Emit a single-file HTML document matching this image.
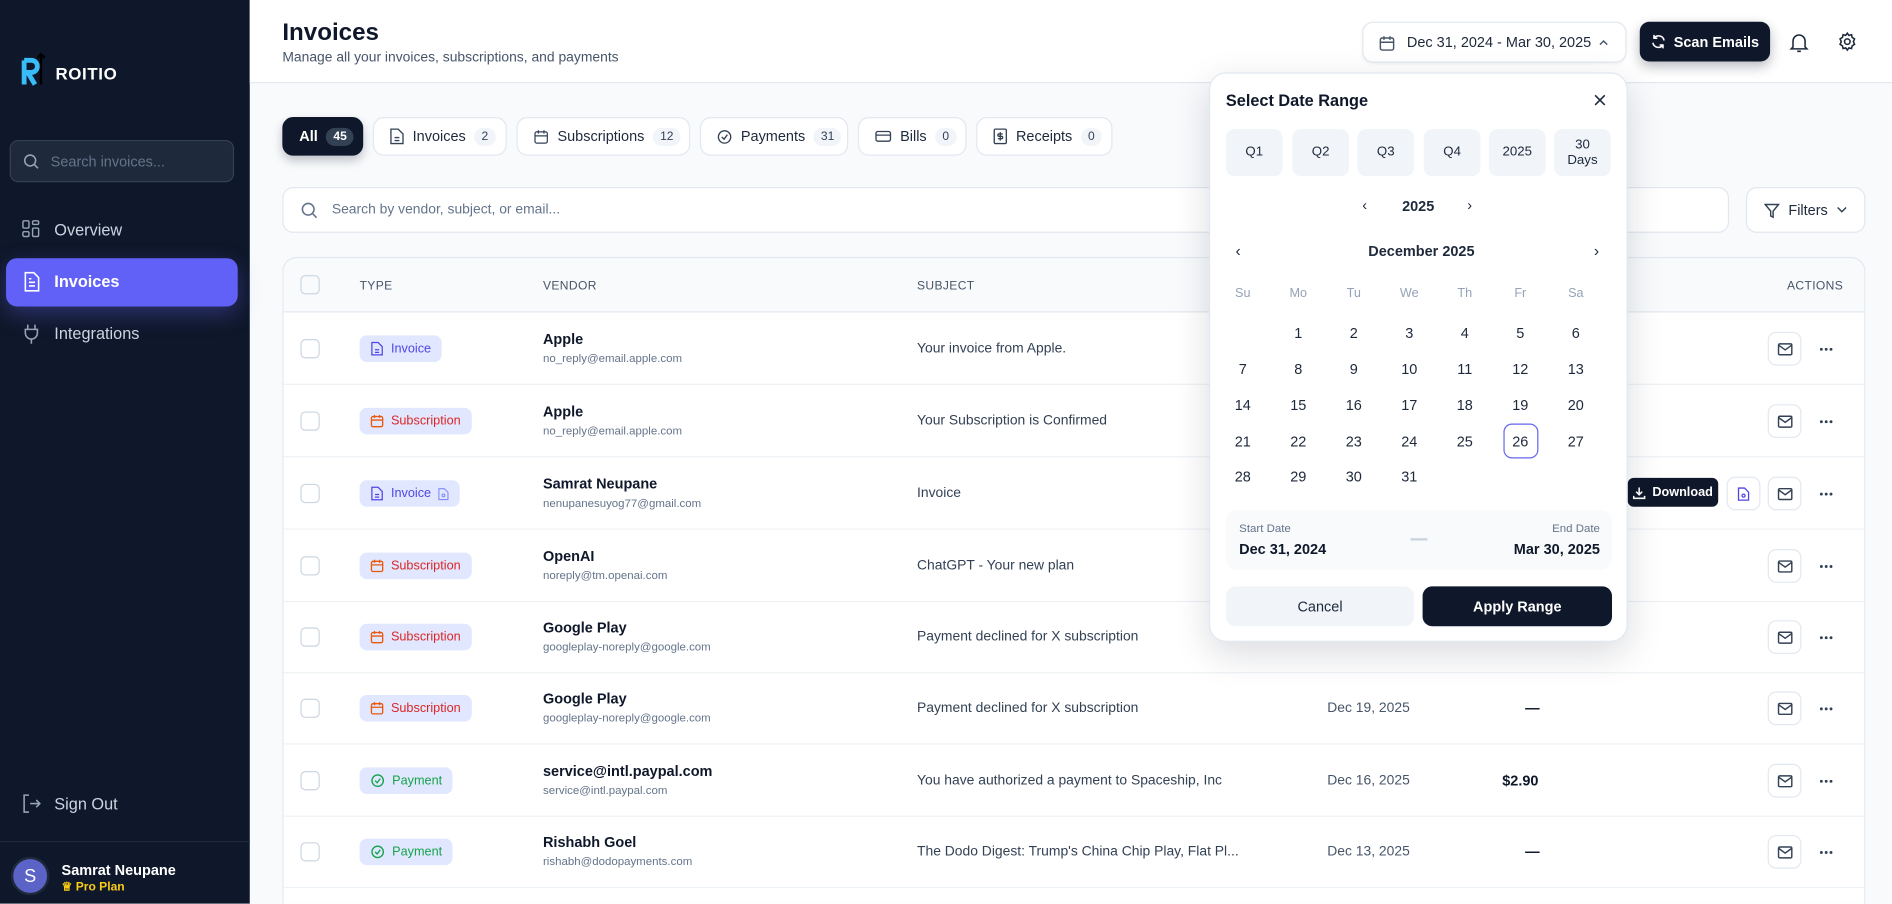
<!DOCTYPE html>
<html><head><meta charset="utf-8">
<style>
*{box-sizing:border-box;margin:0;padding:0}
html,body{width:1892px;height:904px;overflow:hidden;background:#f8fafc;font-family:"Liberation Sans",sans-serif;color:#0f172a}
#w{position:absolute;left:0;top:0;width:1568px;height:749px;transform:scale(1.2066);transform-origin:0 0;background:#f8fafc;overflow:hidden}
.a{position:absolute}
svg{flex-shrink:0}
.sb{left:0;top:0;width:207px;height:749px;background:#0f172a}
.nav{position:absolute;left:18px;font-size:13.5px;color:#cbd5e1;display:flex;align-items:center;gap:11px}
.hdr{left:207px;top:0;width:1361px;height:69px;background:#fff;border-bottom:1px solid #e2e8f0}
.tab{position:absolute;top:97px;height:32px;border:1px solid #e2e8f0;background:#fff;border-radius:9px;display:flex;align-items:center;padding:0 10px 0 13px;gap:7px;font-size:12px;color:#1e293b;white-space:nowrap}
.cnt{background:#f1f5f9;border-radius:9px;font-size:10px;padding:2px 6px;color:#334155}
.tbl{left:234px;top:213px;width:1312px;height:536px;background:#fff;border:1px solid #e2e8f0;border-bottom:none;border-radius:12px 12px 0 0;overflow:hidden}
.th{position:absolute;top:0;left:0;width:100%;height:45px;background:#f8fafc;border-bottom:1px solid #e2e8f0;font-size:10px;color:#475569;letter-spacing:.3px}
.th span{position:absolute;top:18px}
.row{position:absolute;left:0;width:100%;height:60px;border-bottom:1px solid #eef2f6}
.cb{position:absolute;left:14px;top:22px;width:16px;height:16px;border:1.5px solid #cbd5e1;border-radius:4px}
.badge{position:absolute;left:63px;top:19px;height:22px;border-radius:6px;background:#e0e7ff;display:flex;align-items:center;padding:0 9px;gap:6px;font-size:10.5px}
.vn{position:absolute;left:215px;top:15px;font-size:12px;font-weight:bold;color:#0f172a}
.ve{position:absolute;left:215px;top:33px;font-size:9.5px;color:#64748b}
.sj{position:absolute;left:525px;top:24px;font-size:11.5px;color:#334155}
.dt{position:absolute;left:865px;top:24px;font-size:11.5px;color:#475569}
.am{position:absolute;left:1010px;top:23px;font-size:12px;font-weight:bold;color:#0f172a}
.mb{position:absolute;left:1230px;top:16px;width:28px;height:28px;border:1px solid #e2e8f0;border-radius:7px;display:flex;align-items:center;justify-content:center}
.dots{position:absolute;left:1273px;top:29px;width:11px;height:3px}
.pop{left:1002px;top:60px;width:347px;height:472px;background:#fff;border:1px solid #e2e8f0;border-radius:14px;box-shadow:0 10px 30px rgba(15,23,42,.15)}
.q{position:absolute;top:46px;width:47px;height:39px;background:#f1f5f9;border-radius:7px;font-size:11px;color:#1e293b;display:flex;align-items:center;justify-content:center;text-align:center;line-height:13px}
.wd{position:absolute;top:176px;font-size:10.5px;color:#94a3b8;width:30px;text-align:center}
.d{position:absolute;width:30px;text-align:center;font-size:12px;color:#1e293b}
</style></head><body><div id="w">
<div class="a sb">
  <div class="a" style="left:16px;top:42px;width:24px;height:32px">
    <svg width="24" height="32" viewBox="0 0 24 32"><path d="M4 8h6a5 5 0 010 10H7l6 10" fill="none" stroke="#38bdf8" stroke-width="4"/><path d="M4 8v20" stroke="#38bdf8" stroke-width="4"/><path d="M18 28V3M15 6l3-3 3 3" stroke="#000" stroke-width="2" fill="none"/></svg>
  </div>
  <div class="a" style="left:46px;top:53px;font-size:14px;font-weight:bold;color:#fff;letter-spacing:.5px">ROITIO</div>
  <div class="a" style="left:8px;top:116px;width:186px;height:35px;background:#1e293b;border:1px solid #334155;border-radius:7px">
    <svg class="a" style="left:10px;top:10px" width="14" height="14" viewBox="0 0 14 14"><circle cx="6" cy="6" r="4.5" fill="none" stroke="#94a3b8" stroke-width="1.3"/><path d="M9.5 9.5l3 3" stroke="#94a3b8" stroke-width="1.3"/></svg>
    <div class="a" style="left:33px;top:10px;font-size:12px;color:#64748b">Search invoices...</div>
  </div>
  <div class="nav" style="top:182px"><svg width="16" height="16" viewBox="0 0 16 16" fill="none" stroke="#94a3b8" stroke-width="1.2"><rect x="1" y="1" width="5" height="6" rx="1"/><rect x="9" y="1" width="5" height="3" rx="1"/><rect x="9" y="7" width="5" height="7" rx="1"/><rect x="1" y="10" width="5" height="4" rx="1"/></svg>Overview</div>
  <div class="a" style="left:5px;top:214px;width:192px;height:40px;background:#6161f8;border-radius:9px;box-shadow:0 6px 18px rgba(99,102,241,.35)"></div>
  <div class="nav" style="top:225px;color:#fff;font-weight:bold"><svg width="16" height="17" viewBox="0 0 16 17" fill="none" stroke="#fff" stroke-width="1.3"><path d="M3 1h7l4 4v11H3z"/><path d="M6 9h5M6 12h5M6 6h2"/></svg>Invoices</div>
  <div class="nav" style="top:268px"><svg width="16" height="17" viewBox="0 0 16 17" fill="none" stroke="#94a3b8" stroke-width="1.3"><path d="M5 1v4M11 1v4M3 5h10v3a5 5 0 01-10 0zM8 13v4"/></svg>Integrations</div>
  <div class="nav" style="top:658px"><svg width="16" height="16" viewBox="0 0 16 16" fill="none" stroke="#94a3b8" stroke-width="1.3"><path d="M6 1H2v14h4M7 8h8M12 5l3 3-3 3"/></svg>Sign Out</div>
  <div class="a" style="left:0;top:697px;width:207px;height:1px;background:#1e293b"></div>
  <div class="a" style="left:9px;top:710px;width:32px;height:32px;border-radius:50%;background:#5b63c6;border:2px solid #1e293b;color:#fff;font-size:15px;display:flex;align-items:center;justify-content:center">S</div>
  <div class="a" style="left:51px;top:714px;font-size:12px;font-weight:bold;color:#fff">Samrat Neupane</div>
  <div class="a" style="left:51px;top:730px;font-size:10px;font-weight:bold;color:#facc15">♕ Pro Plan</div>
</div>
<div class="a hdr">
  <div class="a" style="left:27px;top:16px;font-size:20px;font-weight:bold">Invoices</div>
  <div class="a" style="left:27px;top:42px;font-size:11.5px;color:#475569">Manage all your invoices, subscriptions, and payments</div>
  <div class="a" style="left:922px;top:18px;width:219px;height:34px;border:1px solid #e2e8f0;border-radius:9px;background:#fff;box-shadow:0 1px 3px rgba(0,0,0,.06)">
    <svg class="a" style="left:13px;top:10px" width="13" height="14" viewBox="0 0 13 14" fill="none" stroke="#475569" stroke-width="1.2"><rect x="1" y="2.5" width="11" height="10" rx="1.5"/><path d="M1 6h11M4 1v3M9 1v3"/></svg>
    <div class="a" style="left:36px;top:9px;font-size:12px;color:#1e293b">Dec 31, 2024 - Mar 30, 2025</div>
    <svg class="a" style="left:194px;top:12px" width="10" height="8" viewBox="0 0 10 8"><path d="M2 6l3-3 3 3" fill="none" stroke="#475569" stroke-width="1.2"/></svg>
  </div>
  <div class="a" style="left:1152px;top:18px;width:108px;height:33px;background:#0f172a;border-radius:8px;box-shadow:0 4px 10px rgba(15,23,42,.3);color:#fff;font-size:12px;font-weight:bold;display:flex;align-items:center;justify-content:center;gap:6px"><svg width="13" height="13" viewBox="0 0 14 14" fill="none" stroke="#fff" stroke-width="1.4"><path d="M12 6a5 5 0 00-9-2M2 8a5 5 0 009 2M3 1v3h3M11 13v-3H8"/></svg>Scan Emails</div>
  <svg class="a" style="left:1276px;top:26px" width="16" height="18" viewBox="0 0 16 18" fill="none" stroke="#1e293b" stroke-width="1.3"><path d="M3 13V8a5 5 0 0110 0v5l1.5 1.5h-13zM6.5 16.5h3"/></svg>
  <svg class="a" style="left:1316px;top:26px" width="16" height="17" viewBox="0 0 16 16" fill="none" stroke="#1e293b" stroke-width="1.3"><circle cx="8" cy="8" r="2.3"/><path d="M8 1l1.3 1.8 2.2-.5.5 2.2L14 5.8l-1 2.2 1 2.2-2 1.3-.5 2.2-2.2-.5L8 15l-1.3-1.8-2.2.5-.5-2.2L2 10.2 3 8 2 5.8l2-1.3.5-2.2 2.2.5z"/></svg>
</div>
<div class="tab" style="left:234px;width:67px;background:#0f172a;border-color:#0f172a;color:#fff;font-weight:bold;box-shadow:0 4px 8px rgba(15,23,42,.25)">All<span class="cnt" style="background:#334155;color:#fff">45</span></div>
<div class="tab" style="left:309px;width:111px"><svg width="12" height="14" viewBox="0 0 12 14" fill="none" stroke="#334155" stroke-width="1.1"><path d="M1 1h6l4 4v8H1zM4 8h4M4 10.5h4"/></svg>Invoices<span class="cnt">2</span></div>
<div class="tab" style="left:428px;width:144px"><svg width="13" height="13" viewBox="0 0 13 14" fill="none" stroke="#334155" stroke-width="1.1"><rect x="1" y="2.5" width="11" height="10" rx="1.5"/><path d="M1 6h11M4 1v3M9 1v3"/></svg>Subscriptions<span class="cnt">12</span></div>
<div class="tab" style="left:580px;width:123px"><svg width="13" height="13" viewBox="0 0 14 14" fill="none" stroke="#334155" stroke-width="1.2"><circle cx="7" cy="7" r="5.5"/><path d="M4.5 7l2 2 3-4"/></svg>Payments<span class="cnt">31</span></div>
<div class="tab" style="left:711px;width:90px"><svg width="14" height="12" viewBox="0 0 14 12" fill="none" stroke="#334155" stroke-width="1.1"><rect x="1" y="2" width="12" height="8" rx="1.5"/><path d="M1 5h12"/></svg>Bills<span class="cnt">0</span></div>
<div class="tab" style="left:809px;width:113px"><svg width="12" height="14" viewBox="0 0 12 14" fill="none" stroke="#334155" stroke-width="1.1"><rect x="1" y="1" width="10" height="12" rx="1"/><path d="M6 3.5v7M8 5H5a1 1 0 000 2h2a1 1 0 010 2H4"/></svg>Receipts<span class="cnt">0</span></div>
<div class="a" style="left:234px;top:155px;width:1199px;height:38px;background:#fff;border:1px solid #e2e8f0;border-radius:9px">
  <svg class="a" style="left:14px;top:11px" width="15" height="15" viewBox="0 0 14 14"><circle cx="6" cy="6" r="4.5" fill="none" stroke="#64748b" stroke-width="1.2"/><path d="M9.5 9.5l3 3" stroke="#64748b" stroke-width="1.2"/></svg>
  <div class="a" style="left:40px;top:12px;font-size:11.5px;color:#64748b">Search by vendor, subject, or email...</div>
</div>
<div class="a" style="left:1447px;top:155px;width:99px;height:38px;background:#fff;border:1px solid #e2e8f0;border-radius:9px;display:flex;align-items:center;justify-content:center;gap:7px;font-size:12px;color:#1e293b"><svg width="13" height="13" viewBox="0 0 13 13" fill="none" stroke="#334155" stroke-width="1.2"><path d="M1 1.5h11L7.5 7v5L5.5 11V7z"/></svg>Filters<svg width="9" height="6" viewBox="0 0 9 6"><path d="M1 1l3.5 3.5L8 1" fill="none" stroke="#334155" stroke-width="1.2"/></svg></div>
<div class="a tbl">
  <div class="th"><div class="cb" style="top:14px"></div><span style="left:63px">TYPE</span><span style="left:215px">VENDOR</span><span style="left:525px">SUBJECT</span><span style="left:1246px">ACTIONS</span></div>
  <div class="row" style="top:45px"><div class="cb"></div><div class="badge" style="color:#4f46e5"><svg width="11" height="12" viewBox="0 0 12 14" fill="none" stroke="#4f46e5" stroke-width="1.2"><path d="M1 1h6l4 4v8H1zM4 8h4M4 10.5h4"/></svg>Invoice</div><div class="vn">Apple</div><div class="ve">no_reply@email.apple.com</div><div class="sj">Your invoice from Apple.</div><div class="mb"><svg width="13" height="11" viewBox="0 0 13 11" fill="none" stroke="#334155" stroke-width="1.2"><rect x="1" y="1" width="11" height="9" rx="1"/><path d="M1 2l5.5 4L12 2"/></svg></div><svg class="dots" viewBox="0 0 11 3" fill="#334155"><circle cx="1.5" cy="1.5" r="1.2"/><circle cx="5.5" cy="1.5" r="1.2"/><circle cx="9.5" cy="1.5" r="1.2"/></svg></div>
  <div class="row" style="top:105px"><div class="cb"></div><div class="badge" style="color:#dc2626"><svg width="11" height="12" viewBox="0 0 13 14" fill="none" stroke="#ea580c" stroke-width="1.3"><rect x="1" y="2.5" width="11" height="10" rx="1.5"/><path d="M1 6h11M4 1v3M9 1v3"/></svg>Subscription</div><div class="vn">Apple</div><div class="ve">no_reply@email.apple.com</div><div class="sj">Your Subscription is Confirmed</div><div class="mb"><svg width="13" height="11" viewBox="0 0 13 11" fill="none" stroke="#334155" stroke-width="1.2"><rect x="1" y="1" width="11" height="9" rx="1"/><path d="M1 2l5.5 4L12 2"/></svg></div><svg class="dots" viewBox="0 0 11 3" fill="#334155"><circle cx="1.5" cy="1.5" r="1.2"/><circle cx="5.5" cy="1.5" r="1.2"/><circle cx="9.5" cy="1.5" r="1.2"/></svg></div>
  <div class="row" style="top:165px"><div class="cb"></div><div class="badge" style="color:#4f46e5"><svg width="11" height="12" viewBox="0 0 12 14" fill="none" stroke="#4f46e5" stroke-width="1.2"><path d="M1 1h6l4 4v8H1zM4 8h4M4 10.5h4"/></svg>Invoice<svg width="9" height="11" viewBox="0 0 12 14" fill="none" stroke="#818cf8" stroke-width="1.2"><path d="M1 1h6l4 4v8H1z"/><circle cx="6" cy="8.5" r="1.5"/></svg></div><div class="vn">Samrat Neupane</div><div class="ve">nenupanesuyog77@gmail.com</div><div class="sj">Invoice</div>
    <div class="a" style="left:1114px;top:17px;width:75px;height:24px;background:#0f172a;border-radius:5px;color:#fff;font-size:10.5px;font-weight:bold;display:flex;align-items:center;justify-content:center;gap:5px"><svg width="11" height="11" viewBox="0 0 11 11" fill="none" stroke="#fff" stroke-width="1.3"><path d="M5.5 1v6M3 4.5l2.5 2.5L8 4.5M1 8v2h9V8"/></svg>Download</div>
    <div class="mb" style="left:1196px"><svg width="10" height="13" viewBox="0 0 12 14" fill="none" stroke="#4f46e5" stroke-width="1.3"><path d="M1 1h6l4 4v8H1z"/><circle cx="6" cy="8.5" r="1.5"/></svg></div>
    <div class="mb"><svg width="13" height="11" viewBox="0 0 13 11" fill="none" stroke="#334155" stroke-width="1.2"><rect x="1" y="1" width="11" height="9" rx="1"/><path d="M1 2l5.5 4L12 2"/></svg></div><svg class="dots" viewBox="0 0 11 3" fill="#334155"><circle cx="1.5" cy="1.5" r="1.2"/><circle cx="5.5" cy="1.5" r="1.2"/><circle cx="9.5" cy="1.5" r="1.2"/></svg></div>
  <div class="row" style="top:225px"><div class="cb"></div><div class="badge" style="color:#dc2626"><svg width="11" height="12" viewBox="0 0 13 14" fill="none" stroke="#ea580c" stroke-width="1.3"><rect x="1" y="2.5" width="11" height="10" rx="1.5"/><path d="M1 6h11M4 1v3M9 1v3"/></svg>Subscription</div><div class="vn">OpenAI</div><div class="ve">noreply@tm.openai.com</div><div class="sj">ChatGPT - Your new plan</div><div class="mb"><svg width="13" height="11" viewBox="0 0 13 11" fill="none" stroke="#334155" stroke-width="1.2"><rect x="1" y="1" width="11" height="9" rx="1"/><path d="M1 2l5.5 4L12 2"/></svg></div><svg class="dots" viewBox="0 0 11 3" fill="#334155"><circle cx="1.5" cy="1.5" r="1.2"/><circle cx="5.5" cy="1.5" r="1.2"/><circle cx="9.5" cy="1.5" r="1.2"/></svg></div>
  <div class="row" style="top:284px"><div class="cb"></div><div class="badge" style="color:#dc2626"><svg width="11" height="12" viewBox="0 0 13 14" fill="none" stroke="#ea580c" stroke-width="1.3"><rect x="1" y="2.5" width="11" height="10" rx="1.5"/><path d="M1 6h11M4 1v3M9 1v3"/></svg>Subscription</div><div class="vn">Google Play</div><div class="ve">googleplay-noreply@google.com</div><div class="sj">Payment declined for X subscription</div><div class="mb"><svg width="13" height="11" viewBox="0 0 13 11" fill="none" stroke="#334155" stroke-width="1.2"><rect x="1" y="1" width="11" height="9" rx="1"/><path d="M1 2l5.5 4L12 2"/></svg></div><svg class="dots" viewBox="0 0 11 3" fill="#334155"><circle cx="1.5" cy="1.5" r="1.2"/><circle cx="5.5" cy="1.5" r="1.2"/><circle cx="9.5" cy="1.5" r="1.2"/></svg></div>
  <div class="row" style="top:343px"><div class="cb"></div><div class="badge" style="color:#dc2626"><svg width="11" height="12" viewBox="0 0 13 14" fill="none" stroke="#ea580c" stroke-width="1.3"><rect x="1" y="2.5" width="11" height="10" rx="1.5"/><path d="M1 6h11M4 1v3M9 1v3"/></svg>Subscription</div><div class="vn">Google Play</div><div class="ve">googleplay-noreply@google.com</div><div class="sj">Payment declined for X subscription</div><div class="dt">Dec 19, 2025</div><div class="am" style="left:1029px">—</div><div class="mb"><svg width="13" height="11" viewBox="0 0 13 11" fill="none" stroke="#334155" stroke-width="1.2"><rect x="1" y="1" width="11" height="9" rx="1"/><path d="M1 2l5.5 4L12 2"/></svg></div><svg class="dots" viewBox="0 0 11 3" fill="#334155"><circle cx="1.5" cy="1.5" r="1.2"/><circle cx="5.5" cy="1.5" r="1.2"/><circle cx="9.5" cy="1.5" r="1.2"/></svg></div>
  <div class="row" style="top:403px"><div class="cb"></div><div class="badge" style="color:#16a34a"><svg width="12" height="12" viewBox="0 0 14 14" fill="none" stroke="#16a34a" stroke-width="1.3"><circle cx="7" cy="7" r="5.5"/><path d="M4.5 7l2 2 3-4"/></svg>Payment</div><div class="vn">service@intl.paypal.com</div><div class="ve">service@intl.paypal.com</div><div class="sj">You have authorized a payment to Spaceship, Inc</div><div class="dt">Dec 16, 2025</div><div class="am">$2.90</div><div class="mb"><svg width="13" height="11" viewBox="0 0 13 11" fill="none" stroke="#334155" stroke-width="1.2"><rect x="1" y="1" width="11" height="9" rx="1"/><path d="M1 2l5.5 4L12 2"/></svg></div><svg class="dots" viewBox="0 0 11 3" fill="#334155"><circle cx="1.5" cy="1.5" r="1.2"/><circle cx="5.5" cy="1.5" r="1.2"/><circle cx="9.5" cy="1.5" r="1.2"/></svg></div>
  <div class="row" style="top:462px"><div class="cb"></div><div class="badge" style="color:#16a34a"><svg width="12" height="12" viewBox="0 0 14 14" fill="none" stroke="#16a34a" stroke-width="1.3"><circle cx="7" cy="7" r="5.5"/><path d="M4.5 7l2 2 3-4"/></svg>Payment</div><div class="vn">Rishabh Goel</div><div class="ve">rishabh@dodopayments.com</div><div class="sj">The Dodo Digest: Trump's China Chip Play, Flat Pl...</div><div class="dt">Dec 13, 2025</div><div class="am" style="left:1029px">—</div><div class="mb"><svg width="13" height="11" viewBox="0 0 13 11" fill="none" stroke="#334155" stroke-width="1.2"><rect x="1" y="1" width="11" height="9" rx="1"/><path d="M1 2l5.5 4L12 2"/></svg></div><svg class="dots" viewBox="0 0 11 3" fill="#334155"><circle cx="1.5" cy="1.5" r="1.2"/><circle cx="5.5" cy="1.5" r="1.2"/><circle cx="9.5" cy="1.5" r="1.2"/></svg></div>
</div>
<div class="a pop">
  <div class="a" style="left:13px;top:15px;font-size:13.5px;font-weight:bold;color:#0f172a">Select Date Range</div>
  <svg class="a" style="left:318px;top:17px" width="10" height="10" viewBox="0 0 10 10"><path d="M1 1l8 8M9 1L1 9" stroke="#1e293b" stroke-width="1.3"/></svg>
  <div class="q" style="left:13px">Q1</div><div class="q" style="left:68px">Q2</div><div class="q" style="left:122px">Q3</div><div class="q" style="left:177px">Q4</div><div class="q" style="left:231px">2025</div><div class="q" style="left:285px">30<br>Days</div>
  <div class="a" style="left:126px;top:102px;font-size:12px;color:#1e293b">‹</div>
  <div class="a" style="left:159px;top:103px;font-size:12px;font-weight:bold;color:#1e293b">2025</div>
  <div class="a" style="left:213px;top:102px;font-size:12px;color:#1e293b">›</div>
  <div class="a" style="left:21px;top:139px;font-size:13px;color:#1e293b">‹</div>
  <div class="a" style="left:131px;top:140px;font-size:12px;font-weight:bold;color:#1e293b">December 2025</div>
  <div class="a" style="left:318px;top:139px;font-size:13px;color:#1e293b">›</div>
  <div class="wd" style="left:12px">Su</div><div class="wd" style="left:58px">Mo</div><div class="wd" style="left:104px">Tu</div><div class="wd" style="left:150px">We</div><div class="wd" style="left:196px">Th</div><div class="wd" style="left:242px">Fr</div><div class="wd" style="left:288px">Sa</div>
  <div class="d" style="left:58px;top:208px">1</div><div class="d" style="left:104px;top:208px">2</div><div class="d" style="left:150px;top:208px">3</div><div class="d" style="left:196px;top:208px">4</div><div class="d" style="left:242px;top:208px">5</div><div class="d" style="left:288px;top:208px">6</div>
  <div class="d" style="left:12px;top:238px">7</div><div class="d" style="left:58px;top:238px">8</div><div class="d" style="left:104px;top:238px">9</div><div class="d" style="left:150px;top:238px">10</div><div class="d" style="left:196px;top:238px">11</div><div class="d" style="left:242px;top:238px">12</div><div class="d" style="left:288px;top:238px">13</div>
  <div class="d" style="left:12px;top:268px">14</div><div class="d" style="left:58px;top:268px">15</div><div class="d" style="left:104px;top:268px">16</div><div class="d" style="left:150px;top:268px">17</div><div class="d" style="left:196px;top:268px">18</div><div class="d" style="left:242px;top:268px">19</div><div class="d" style="left:288px;top:268px">20</div>
  <div class="d" style="left:12px;top:298px">21</div><div class="d" style="left:58px;top:298px">22</div><div class="d" style="left:104px;top:298px">23</div><div class="d" style="left:150px;top:298px">24</div><div class="d" style="left:196px;top:298px">25</div>
  <div class="a" style="left:243px;top:290px;width:29px;height:29px;border:1.3px solid #6366f1;border-radius:7px"></div><div class="d" style="left:242px;top:298px">26</div><div class="d" style="left:288px;top:298px">27</div>
  <div class="d" style="left:12px;top:327px">28</div><div class="d" style="left:58px;top:327px">29</div><div class="d" style="left:104px;top:327px">30</div><div class="d" style="left:150px;top:327px">31</div>
  <div class="a" style="left:13px;top:362px;width:320px;height:49px;background:#f8fafc;border-radius:9px">
    <div class="a" style="left:11px;top:10px;font-size:9.5px;color:#64748b">Start Date</div>
    <div class="a" style="left:11px;top:25px;font-size:12px;font-weight:bold;color:#0f172a">Dec 31, 2024</div>
    <div class="a" style="left:153px;top:23px;width:14px;height:2px;background:#cbd5e1"></div>
    <div class="a" style="right:10px;top:10px;font-size:9.5px;color:#64748b">End Date</div>
    <div class="a" style="right:10px;top:25px;font-size:12px;font-weight:bold;color:#0f172a">Mar 30, 2025</div>
  </div>
  <div class="a" style="left:13px;top:425px;width:156px;height:33px;background:#f1f5f9;border-radius:8px;font-size:12px;color:#1e293b;display:flex;align-items:center;justify-content:center">Cancel</div>
  <div class="a" style="left:176px;top:425px;width:157px;height:33px;background:#0f172a;border-radius:8px;font-size:12px;font-weight:bold;color:#fff;display:flex;align-items:center;justify-content:center">Apply Range</div>
</div>
</div></body></html>
